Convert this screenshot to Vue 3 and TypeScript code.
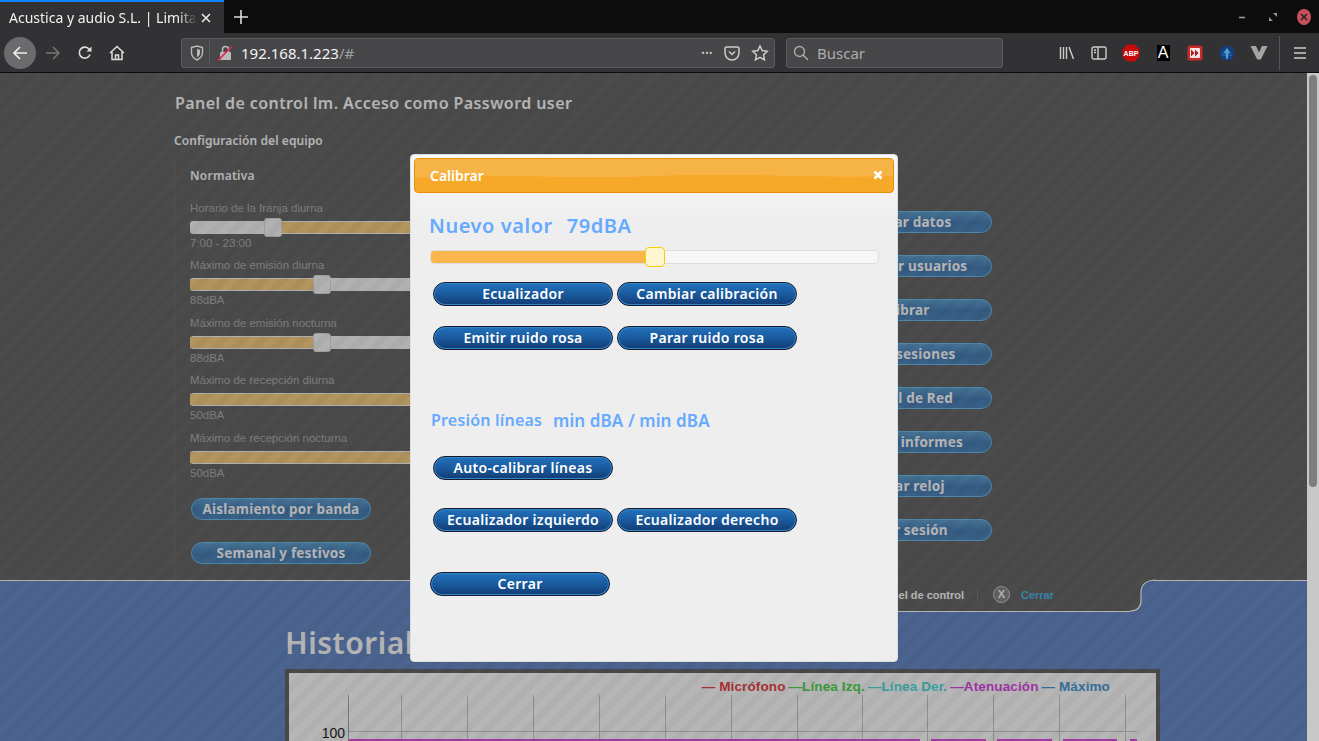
<template>
  <div class="browser">
    <!-- barra de pestañas -->
    <div class="tabbar">
      <div class="tab">
        <span class="tab-title">Acustica y audio S.L. | Limita</span>
        <svg class="tab-close" width="10" height="10" viewBox="0 0 10 10"><path d="M1 1l8 8M9 1l-8 8" stroke="#eee" stroke-width="1.5" /></svg>
      </div>
      <svg class="new-tab" width="14" height="14" viewBox="0 0 14 14"><path d="M7 0v14M0 7h14" stroke="#ddd" stroke-width="1.6" /></svg>
      <div class="win-btns">
        <svg width="10" height="10" viewBox="0 0 10 10"><path d="M0 5.5h6" stroke="#999" stroke-width="1.6" /></svg>
        <svg width="10" height="10" viewBox="0 0 10 10"><path d="M5 1h4v4zM1 5l4 4H1z" fill="#999" /></svg>
        <span class="win-close"><svg width="8" height="8" viewBox="0 0 8 8"><path d="M1 1l6 6M7 1L1 7" stroke="#222" stroke-width="1.6" /></svg></span>
      </div>
    </div>

    <!-- barra de herramientas -->
    <div class="toolbar">
      <div class="tb back">
        <svg width="16" height="16" viewBox="0 0 16 16" fill="none" stroke="#eee" stroke-width="1.7"><path d="M15 8H2M8 2L2 8l6 6" /></svg>
      </div>
      <div class="tb forward">
        <svg width="16" height="16" viewBox="0 0 16 16" fill="none" stroke="#777" stroke-width="1.5"><path d="M1 8h13M8 2l6 6-6 6" /></svg>
      </div>
      <div class="tb">
        <svg width="16" height="16" viewBox="0 0 16 16" fill="none" stroke="#ddd" stroke-width="1.6"><path d="M13 9.5A5.5 5.5 0 1 1 11.500 3.500L14 6" /><path d="M14.500 1.500V6.500H9.500" fill="#ddd" stroke="none" /></svg>
      </div>
      <div class="tb">
        <svg width="16" height="16" viewBox="0 0 16 16" fill="none" stroke="#ddd" stroke-width="1.5"><path d="M1 8l7-6.500L15 8M3 7v7.500h10V7M6.500 14.500V10h3v4.500" /></svg>
      </div>

      <div class="urlbar">
        <svg width="14" height="16" viewBox="0 0 14 16" fill="none" stroke="#bbb" stroke-width="1.4"><path d="M1.500 2.500L7 1l5.500 1.500V8c0 3.500-2.500 5.500-5.500 7-3-1.500-5.500-3.500-5.500-7z" /><path d="M7 4l3 .8V8c0 2-1.300 3.200-3 4.200z" fill="#bbb" stroke="none" /></svg>
        <span class="url-sep"></span>
        <svg class="lock" width="16" height="16" viewBox="0 0 16 16"><rect x="3" y="7" width="11" height="8" rx="1" fill="#bbb" /><path d="M5.500 7V4.500a3 3 0 0 1 6 0V7" fill="none" stroke="#bbb" stroke-width="1.500" /><path d="M1 15.500L14.500 1.500" stroke="#e22850" stroke-width="1.800" /></svg>
        <span class="url-text">192.168.1.223<em>/#</em></span>
        <span class="url-dots">•••</span>
        <svg width="16" height="16" viewBox="0 0 16 16" fill="none" stroke="#ccc" stroke-width="1.5"><path d="M2.500 2h11A1.500 1.500 0 0 1 15 3.500V8a7 7 0 0 1-14 0V3.500A1.500 1.500 0 0 1 2.500 2z" /><path d="M5 6.500l3 3 3-3" /></svg>
        <svg class="star" width="18" height="18" viewBox="0 0 18 18" fill="none" stroke="#ccc" stroke-width="1.5"><path d="M9 2l2.200 4.600 5 .7-3.600 3.500.9 5L9 13.400 4.500 15.800l.9-5L1.800 7.300l5-.7z" /></svg>
      </div>

      <div class="searchbar">
        <svg width="16" height="16" viewBox="0 0 16 16" fill="none" stroke="#aaa" stroke-width="1.4"><circle cx="6.500" cy="6.500" r="5" /><path d="M10 10l5 5" /></svg>
        <span>Buscar</span>
      </div>

      <div class="tb first-right">
        <svg width="16" height="16" viewBox="0 0 16 16" fill="none" stroke="#ccc" stroke-width="1.400"><path d="M1.500 2v12M4.500 2v12M7.500 2v12M10 2l4.500 12" /></svg>
      </div>
      <div class="tb">
        <svg width="16" height="16" viewBox="0 0 16 16" fill="none" stroke="#ccc" stroke-width="1.400"><rect x="1" y="2" width="14" height="12" rx="2" /><path d="M7 2v12M3 5h2M3 7.500h2" /></svg>
      </div>
      <div class="tb">
        <svg width="18" height="18" viewBox="0 0 18 18"><path d="M5.500 0.500h7l5 5v7l-5 5h-7l-5-5v-7z" fill="#c80a0a" /><text x="9" y="11.500" text-anchor="middle" class="abp">ABP</text></svg>
      </div>
      <div class="tb">
        <span class="a-icon">A</span>
      </div>
      <div class="tb">
        <svg width="16" height="16" viewBox="0 0 16 16"><rect x="0.500" y="0.500" width="15" height="15" rx="2" fill="#c42b2b" /><rect x="3" y="3" width="10" height="10" rx="1" fill="#f4e4e4" /><path d="M4 4.500l3.500 3.500L4 11.500zM8 4.500L11.500 8 8 11.500z" fill="#b01818" /></svg>
      </div>
      <div class="tb">
        <svg width="16" height="16" viewBox="0 0 16 16"><circle cx="8" cy="8" r="7.500" fill="#14407e" /><path d="M8 3l4 5.500-2.300-.8L8.800 14H7.200L6.300 7.700 4 8.500z" fill="#4f9fd4" /><path d="M3 11c1.500-1 2.500-1 3.500-.6M13 11c-1.500-1-2.500-1-3.500-.6" stroke="#2f6fae" fill="none" /></svg>
      </div>
      <div class="tb">
        <svg width="18" height="16" viewBox="0 0 18 16"><path d="M0.500 1h5.500L9 7.500 12 1h5.500L10.800 14.500H7.200z" fill="#a4a4a4" /></svg>
      </div>
      <span class="tb-sep"></span>
      <div class="tb menu">
        <svg width="14" height="12" viewBox="0 0 14 12"><path d="M1 1h12M1 6h12M1 11h12" stroke="#ccc" stroke-width="1.500" /></svg>
      </div>
    </div>

    <div class="viewport">
      <div class="page">
        <section class="panel">
          <h1>Panel de control lm. Acceso como Password user</h1>
          <h2>Configuración del equipo</h2>
          <div class="panel-cols">
            <div class="config">
              <h3>Normativa</h3>
              <div v-for="s in sliders" :key="s.label" class="row">
                <div class="row-label">{{ s.label }}</div>
                <div class="track">
                  <div class="track-tan" :style="{ left: s.tanFrom + 'px', width: s.tanWidth + 'px' }"></div>
                  <div v-if="s.handle !== null" class="handle" :style="{ left: s.handle + 'px' }"></div>
                </div>
                <div class="row-label">{{ s.value }}</div>
              </div>
              <div class="left-btns">
                <button class="pbtn">Aislamiento por banda</button>
                <button class="pbtn">Semanal y festivos</button>
              </div>
            </div>
            <div class="right-btns">
              <button v-for="b in rightButtons" :key="b" class="pbtn">{{ b }}</button>
            </div>
          </div>
        </section>

        <section class="lower">
          <div class="tabstrip">
            <div class="foot-tab">
              <span>Panel de control</span>
              <i class="foot-sep"></i>
              <span class="x-icon">X</span>
              <span class="foot-close">Cerrar</span>
              <svg class="foot-curve" width="26" height="32" viewBox="0 0 26 32"><path d="M0 31C7 31 11 27 11 20V12C11 5 16 0 26 0V-1H0z" fill="#696969" /><path d="M0 31C7 31 11 27 11 20V12C11 5 16 0 26 0" fill="none" stroke="#fff" stroke-width="1.200" /></svg>
            </div>
          </div>
          <h2 class="hist-title">Historial</h2>
          <div class="chart">
            <div class="legend">
              <span class="c-red">— Micrófono</span>
              <span class="c-green">—Línea Izq.</span>
              <span class="c-teal">—Línea Der.</span>
              <span class="c-purple">—Atenuación</span>
              <span class="c-blue">— Máximo</span>
            </div>
            <svg class="plot" width="866" height="60" viewBox="289 695 866 60">
              <line v-for="x in gridX" :key="x" :x1="x + 0.500" y1="695" :x2="x + 0.500" y2="745" stroke="#c8c8c8" />
              <line x1="348.500" y1="695" x2="348.500" y2="745" stroke="#a8a8a8" />
              <line x1="349" y1="731.500" x2="1137" y2="731.500" stroke="#c8c8c8" />
              <line v-for="seg in purpleSegments" :key="seg[0]" :x1="seg[0]" y1="740" :x2="seg[1]" y2="740" stroke="#e454e6" stroke-width="2" />
              <text x="345" y="738" text-anchor="end" class="axis">100</text>
            </svg>
          </div>
        </section>

        <div class="stripes"></div>

        <!-- diálogo modal -->
        <div class="dialog">
          <div class="dialog-title">
            <svg class="gloss" width="478" height="33" viewBox="0 0 478 33" preserveAspectRatio="none"><path d="M0 0H478V17C400 20 330 13 240 17 150 21 70 13 0 19z" fill="#fff" opacity=".14" /></svg>
            <span>Calibrar</span>
            <svg class="dialog-x" width="10" height="10" viewBox="0 0 10 10"><path d="M1.500 1.500l7 7M8.500 1.500l-7 7" stroke="#fff" stroke-width="2.600" /></svg>
          </div>
          <div class="dialog-body">
            <div class="value-line"><span>Nuevo valor</span><span>79dBA</span></div>
            <div class="dlg-slider">
              <div class="dlg-fill" :style="{ width: dialogFill + '%' }"></div>
              <div class="dlg-handle" :style="{ left: dialogFill + '%' }"></div>
            </div>
            <div class="btn-row first">
              <button class="mbtn">Ecualizador</button>
              <button class="mbtn">Cambiar calibración</button>
            </div>
            <div class="btn-row">
              <button class="mbtn">Emitir ruido rosa</button>
              <button class="mbtn">Parar ruido rosa</button>
            </div>
            <div class="pressure"><span class="p-small">Presión líneas</span><span class="p-big">min dBA / min dBA</span></div>
            <div class="btn-row auto">
              <button class="mbtn">Auto-calibrar líneas</button>
            </div>
            <div class="btn-row eq">
              <button class="mbtn">Ecualizador izquierdo</button>
              <button class="mbtn">Ecualizador derecho</button>
            </div>
            <button class="mbtn close">Cerrar</button>
          </div>
        </div>
      </div>
      <div class="scrollbar"><div class="thumb"></div></div>
    </div>
  </div>
</template>

<script setup lang="ts">
interface SliderRow {
  label: string
  value: string
  tanFrom: number
  tanWidth: number
  handle: number | null
}

const sliders: SliderRow[] = [
  { label: 'Horario de la franja diurna', value: '7:00 - 23:00', tanFrom: 82, tanWidth: 300, handle: 74 },
  { label: 'Máximo de emisión diurna', value: '88dBA', tanFrom: 0, tanWidth: 131, handle: 123 },
  { label: 'Máximo de emisión nocturna', value: '88dBA', tanFrom: 0, tanWidth: 131, handle: 123 },
  { label: 'Máximo de recepción diurna', value: '50dBA', tanFrom: 0, tanWidth: 600, handle: null },
  { label: 'Máximo de recepción nocturna', value: '50dBA', tanFrom: 0, tanWidth: 600, handle: null },
]

const rightButtons = [
  'Guardar datos',
  'Gestionar usuarios',
  'Calibrar',
  'Cerrar sesiones',
  'Control de Red',
  'Generar informes',
  'Ajustar reloj',
  'Cerrar sesión',
]

const gridX = [401, 467, 533, 599, 665, 731, 797, 862, 927, 993, 1059, 1125]
const purpleSegments = [
  [349, 920],
  [931, 986],
  [997, 1052],
  [1063, 1117],
  [1130, 1137],
]

const dialogFill = 50.2
</script>

<style>
html,
body {
  margin: 0;
  overflow: hidden;
}
</style>

<style scoped>
.browser {
  width: 1319px;
  height: 741px;
  display: flex;
  flex-direction: column;
  overflow: hidden;
  font-family: "Noto Sans", sans-serif;
  background: #0c0c0d;
}

.tabbar {
  height: 33px;
  flex: none;
  display: flex;
  align-items: center;
  background: #0c0c0d;
}
.tab {
  width: 224px;
  height: 33px;
  flex: none;
  box-sizing: border-box;
  border-top: 2px solid #0a84ff;
  background: #323234;
  display: flex;
  align-items: center;
  padding-left: 9px;
  color: #f2f2f2;
  font-size: 14px;
}
.tab-title {
  width: 188px;
  white-space: nowrap;
  -webkit-mask-image: linear-gradient(90deg, #000 90%, transparent);
  mask-image: linear-gradient(90deg, #000 90%, transparent);
}
.tab-close {
  margin-left: 4px;
}
.new-tab {
  margin-left: 10px;
}
.win-btns {
  margin-left: auto;
  display: flex;
  align-items: center;
  gap: 19px;
  padding-right: 8px;
}
.win-close {
  width: 14px;
  height: 16px;
  border-radius: 50%;
  background: #c94f5b;
  display: flex;
  align-items: center;
  justify-content: center;
}

.toolbar {
  height: 40px;
  flex: none;
  box-sizing: border-box;
  display: flex;
  align-items: center;
  padding-left: 4px;
  background: #323234;
  border-bottom: 1px solid #0c0c0d;
}
.tb {
  width: 32px;
  height: 32px;
  flex: none;
  display: flex;
  align-items: center;
  justify-content: center;
}
.back {
  border-radius: 50%;
  background: #6b6b6d;
}
.forward {
  margin-left: 1px;
}
.abp {
  font: 700 7px "Liberation Sans", sans-serif;
  fill: #fff;
}
.a-icon {
  width: 13px;
  height: 16px;
  background: #000;
  color: #fff;
  font: 400 16px/16px "Liberation Sans", sans-serif;
  text-align: center;
}
.urlbar {
  width: 594px;
  height: 30px;
  margin-left: 48px;
  box-sizing: border-box;
  border: 1px solid #5c5c5e;
  border-radius: 3px;
  background: #474749;
  display: flex;
  align-items: center;
  padding: 0 5px 0 8px;
}
.url-sep {
  width: 1px;
  height: 24px;
  margin: 0 7px 0 5px;
  background: #5c5c5e;
}
.lock {
  flex: none;
}
.url-text {
  margin-left: 8px;
  color: #f2f2f2;
  font-size: 15px;
}
.url-text em {
  color: #a0a0a0;
  font-style: normal;
}
.url-dots {
  margin-left: auto;
  margin-right: 11px;
  color: #ccc;
  font-size: 9px;
  letter-spacing: 0.5px;
}
.star {
  margin-left: 11px;
}
.searchbar {
  width: 217px;
  height: 30px;
  margin-left: 11px;
  box-sizing: border-box;
  border: 1px solid #5c5c5e;
  border-radius: 3px;
  background: #474749;
  display: flex;
  align-items: center;
  gap: 8px;
  padding-left: 6px;
  color: #adadad;
  font-size: 15px;
}
.first-right {
  margin-left: 48px;
}
.tb-sep {
  width: 1px;
  height: 34px;
  margin-left: 4px;
  background: #555;
}
.menu {
  margin-left: 4px;
}

.viewport {
  flex: 1;
  min-height: 0;
  display: flex;
}
.page {
  position: relative;
  flex: 1;
  overflow: hidden;
  background: #698bc8;
}
.scrollbar {
  width: 12px;
  flex: none;
  background: #c8c8c8;
  padding-top: 2px;
  box-sizing: border-box;
}
.thumb {
  width: 8px;
  height: 412px;
  margin-left: 2px;
  border-radius: 4px;
  background: #7e7e7e;
}

.panel {
  height: 508px;
  box-sizing: border-box;
  padding: 20px 0 0 174px;
  background: #696969;
  border-bottom: 1px solid #fff;
  color: #fff;
}
.panel h1 {
  margin: 0 0 0 1px;
  font-size: 16px;
  line-height: 20px;
  font-weight: 600;
  letter-spacing: 0.42px;
}
.panel h2 {
  margin: 18px 0 0;
  font-size: 12px;
  line-height: 20px;
  font-weight: 600;
  letter-spacing: 0.08px;
}
.panel-cols {
  display: flex;
  margin-top: 10px;
  align-items: flex-start;
}
.config {
  width: 622px;
  height: 419px;
  flex: none;
  padding-left: 15px;
  border-left: 1px solid #747474;
}
.config h3 {
  margin: 5px 0 15px;
  font-size: 12px;
  line-height: 20px;
  font-weight: 600;
  letter-spacing: 0.25px;
}
.row {
  height: 57.4px;
  width: 600px;
}
.row-label {
  font: 400 11.5px/14px "Liberation Sans", sans-serif;
  color: #b0b0b0;
}
.track {
  position: relative;
  height: 13px;
  margin: 6px 0 2px;
  box-sizing: border-box;
  border-radius: 3px;
  background: #f8f8f8;
}
.track-tan {
  position: absolute;
  top: 1px;
  bottom: 1px;
  background: #f8cf84;
}
.handle {
  position: absolute;
  top: -3px;
  width: 16px;
  height: 17px;
  border-radius: 3px;
  background: #f8f8f8;
  border: 1px solid #ddd;
}
.left-btns {
  display: flex;
  flex-direction: column;
  gap: 22px;
  margin: 10px 0 0 1px;
}
.right-btns {
  display: flex;
  flex-direction: column;
  gap: 22px;
  margin: 50px 0 0;
}
.pbtn {
  width: 180px;
  height: 22px;
  box-sizing: border-box;
  padding: 0;
  border: 1px solid #6cc0f0;
  border-radius: 11px;
  background: linear-gradient(#62a0d0, #4a80b8 55%, #5088bc);
  color: #fff;
  font: 700 13.500px/18px "Noto Sans", sans-serif;
  letter-spacing: 0.2px;
  white-space: nowrap;
}

.lower {
  color: #fff;
}
.tabstrip {
  display: flex;
  justify-content: flex-end;
  margin-top: -1px;
  padding-right: 177px;
}
.foot-tab {
  position: relative;
  width: 520px;
  height: 32px;
  box-sizing: border-box;
  display: flex;
  align-items: center;
  justify-content: flex-end;
  padding: 0 76px 2px 0;
  background: #696969;
  border-bottom: 1px solid #fff;
  font: 700 11px "Liberation Sans", sans-serif;
}
.foot-sep {
  width: 1px;
  height: 12px;
  margin: 0 15px 0 13px;
  background: #7c7c7c;
}
.x-icon {
  width: 15px;
  height: 15px;
  border-radius: 50%;
  border: 1px solid #ccc;
  background: #888;
  text-align: center;
  font-size: 11px;
  line-height: 15px;
}
.foot-close {
  margin-left: 11px;
  color: #4fb8ee;
}
.foot-curve {
  position: absolute;
  left: 100%;
  top: 0;
  overflow: visible;
}
.hist-title {
  margin: 13px 0 8px 285px;
  font-size: 30px;
  line-height: 36px;
  font-weight: 600;
  letter-spacing: 0.5px;
}
.chart {
  width: 875px;
  height: 120px;
  margin-left: 285px;
  box-sizing: border-box;
  border: 4px solid #666;
  border-bottom: 0;
  background: #fff;
}
.legend {
  height: 22px;
  box-sizing: border-box;
  padding-right: 46px;
  display: flex;
  justify-content: flex-end;
  gap: 3px;
  font: 700 13.500px/27px "Liberation Sans", sans-serif;
  letter-spacing: 0.12px;
}
.c-red { color: #ea4545; }
.c-green { color: #4fd64f; }
.c-teal { color: #4edcdc; }
.c-purple { color: #de48e8; }
.c-blue { color: #479cd8; }
.plot {
  display: block;
}
.axis {
  font: 400 14px "Liberation Sans", sans-serif;
  fill: #222;
}

.stripes {
  position: absolute;
  inset: 0;
  background: repeating-linear-gradient(135deg, rgba(0, 0, 0, 0.285) 0 7px, rgba(0, 0, 0, 0.31) 7px 14px);
}

.dialog {
  position: absolute;
  left: 410px;
  top: 81px;
  width: 488px;
  height: 508px;
  box-sizing: border-box;
  padding: 3px;
  border: 1px solid #ddd;
  border-radius: 4px;
  background: linear-gradient(#f8f8f8, #eee 70px);
}
.dialog-title {
  position: relative;
  height: 35px;
  box-sizing: border-box;
  padding-left: 15px;
  display: flex;
  align-items: center;
  border: 1px solid #e78f08;
  border-radius: 4px;
  background: #f6a828;
  color: #fff;
  font-size: 14px;
  font-weight: 600;
}
.dialog-title span {
  position: relative;
}
.gloss {
  position: absolute;
  left: 0;
  top: 0;
}
.dialog-x {
  position: absolute;
  right: 10px;
  top: 11px;
}
.dialog-body {
  padding-left: 16px;
}
.value-line {
  display: flex;
  gap: 14px;
  margin: 19px 0 0 -1px;
  height: 28px;
  color: #66aaff;
  font-size: 20px;
  line-height: 28px;
  font-weight: 600;
  letter-spacing: 0.55px;
}
.dlg-slider {
  position: relative;
  width: 449px;
  height: 14px;
  margin-top: 10px;
  box-sizing: border-box;
  border: 1px solid #ddd;
  border-radius: 4px;
  background: #f6f6f6;
}
.dlg-fill {
  height: 100%;
  background: #f8b64c;
  border-radius: 3px 0 0 3px;
}
.dlg-handle {
  position: absolute;
  top: -4px;
  width: 20px;
  height: 20px;
  margin-left: -10px;
  box-sizing: border-box;
  border: 1px solid #fbcb09;
  border-radius: 4px;
  background: #fdf5ce;
}
.btn-row {
  display: flex;
  gap: 4px;
  margin: 20px 0 0 3px;
}
.btn-row.first {
  margin-top: 18px;
}
.mbtn {
  width: 180px;
  height: 24px;
  box-sizing: border-box;
  padding: 0;
  border: 1px solid #1a1a2a;
  border-radius: 12px;
  background: linear-gradient(#2272bc, #1a5a9e 50%, #123c74);
  box-shadow: inset 0 0 0 1px #2f86c8;
  color: #fff;
  font: 600 14px/20px "Noto Sans", sans-serif;
  letter-spacing: 0.3px;
  white-space: nowrap;
}
.pressure {
  margin: 57px 0 0 1px;
  height: 26px;
  display: flex;
  align-items: center;
  color: #66aaff;
  font-weight: 600;
}
.p-small {
  font-size: 16px;
  width: 122px;
  letter-spacing: 0.2px;
}
.p-big {
  font-size: 17px;
  letter-spacing: 0.1px;
}
.btn-row.auto {
  margin-top: 23px;
}
.btn-row.eq {
  margin-top: 28px;
}
.close {
  display: block;
  margin-top: 40px;
}
</style>
